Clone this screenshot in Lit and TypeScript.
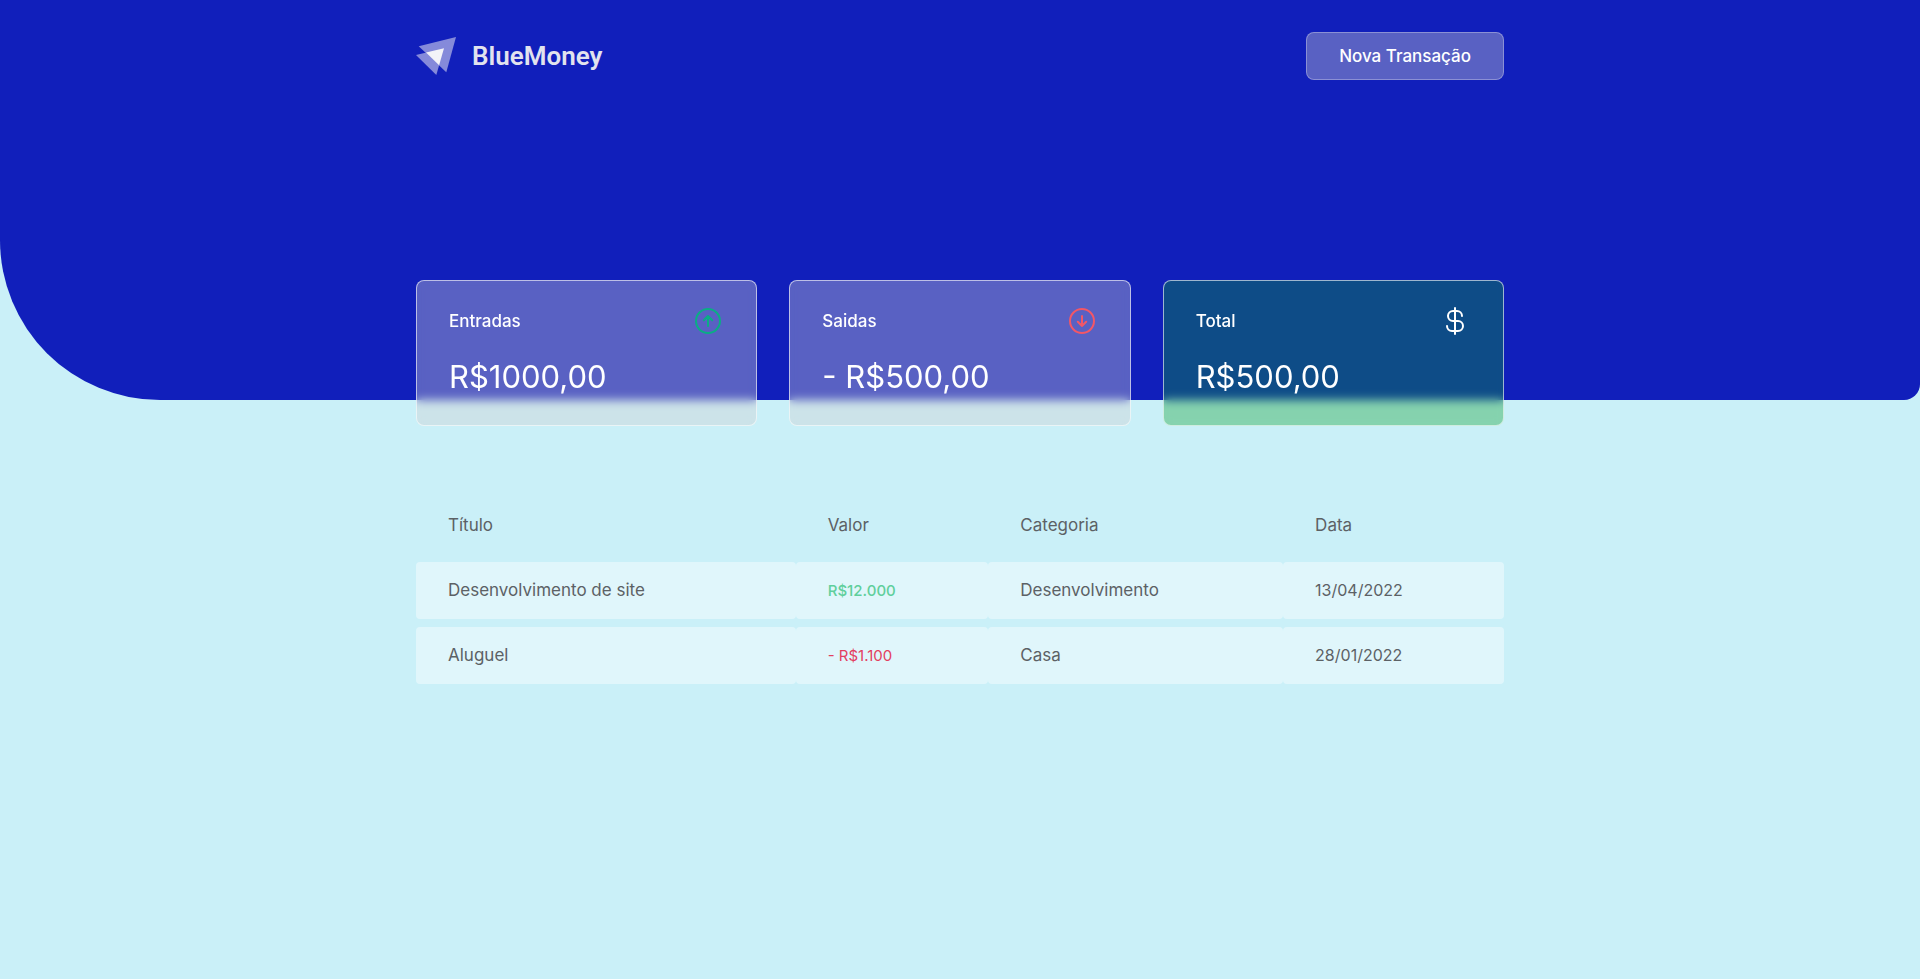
import { LitElement, html, css, svg } from "lit";
import { customElement, property } from "lit/decorators.js";
import { classMap } from "lit/directives/class-map.js";

type Kind = "income" | "outcome" | "total";

interface Transaction {
  title: string;
  amount: string;
  negative: boolean;
  category: string;
  date: string;
}

const transactions: Transaction[] = [
  { title: "Desenvolvimento de site", amount: "R$12.000", negative: false, category: "Desenvolvimento", date: "13/04/2022" },
  { title: "Aluguel", amount: "- R$1.100", negative: true, category: "Casa", date: "28/01/2022" },
];

const icons = {
  income: svg`<circle cx="16" cy="16" r="12"/><path d="M11.8 15.2 16 11l4.2 4.2M16 21V11"/>`,
  outcome: svg`<circle cx="16" cy="16" r="12"/><path d="M11.8 16.8 16 21l4.2-4.2M16 11v10"/>`,
  total: svg`<path d="M16 3v26M23 11a5 5 0 0 0-5-5h-4a5 5 0 0 0 0 10h5a5 5 0 0 1 0 10h-6a5 5 0 0 1-5-5"/>`,
};

@customElement("summary-card")
export class SummaryCard extends LitElement {
  @property() kind: Kind = "income";
  @property() label = "";
  @property() value = "";

  static styles = css`
    :host {
      display: block;
    }
    .card {
      padding: 24px 32px;
      border: 1px solid rgba(255, 255, 255, 0.6);
      border-radius: 8px;
      background: rgba(208, 205, 208, 0.38);
      backdrop-filter: blur(5px);
      color: #fff;
    }
    .card.total {
      background: rgba(11, 158, 44, 0.36);
    }
    .top {
      display: flex;
      align-items: center;
      justify-content: space-between;
    }
    .label {
      margin: 0;
      font-size: 17px;
      line-height: 24px;
      font-weight: 500;
    }
    .value {
      margin: 16px 0 0;
      font-size: 31px;
      line-height: 48px;
      font-weight: 400;
    }
    .icon {
      width: 32px;
      height: 32px;
      fill: none;
      stroke: #fff;
      stroke-width: 2;
      stroke-linecap: round;
      stroke-linejoin: round;
    }
    .income .icon {
      stroke: #0aae85;
    }
    .outcome .icon {
      stroke: #f25767;
    }
  `;

  render() {
    return html`
      <article class=${classMap({ card: true, [this.kind]: true })}>
        <div class="top">
          <h2 class="label">${this.label}</h2>
          <svg class="icon" viewBox="0 0 32 32" aria-hidden="true">${icons[this.kind]}</svg>
        </div>
        <p class="value">${this.value}</p>
      </article>
    `;
  }
}

@customElement("app-root")
export class AppRoot extends LitElement {
  static styles = css`
    :host {
      display: block;
      min-height: 100vh;
      background: #caf0f8;
      font-family: Inter, "Open Sans", sans-serif;
    }
    .container {
      box-sizing: border-box;
      max-width: 1120px;
      margin: 0 auto;
      padding: 0 16px;
    }
    .hero {
      box-sizing: border-box;
      height: 400px;
      padding-top: 32px;
      border-radius: 0 0 16px 160px;
      background: #111fbb;
    }
    .bar {
      display: flex;
      align-items: center;
      justify-content: space-between;
    }
    .brand {
      display: flex;
      align-items: center;
      gap: 16px;
      color: #e2e3ee;
      font-family: Roboto, sans-serif;
      font-size: 26px;
      line-height: 32px;
      font-weight: 600;
      text-decoration: none;
    }
    .logo {
      width: 40px;
      height: 38px;
    }
    .new {
      height: 48px;
      padding: 0 32px;
      border: 1px solid rgba(255, 255, 255, 0.3);
      border-radius: 8px;
      background: rgba(208, 205, 208, 0.38);
      color: #fff;
      font-family: inherit;
      font-size: 17px;
      line-height: 24px;
      font-weight: 500;
      cursor: pointer;
    }
    .summary {
      display: grid;
      grid-template-columns: repeat(3, 1fr);
      gap: 32px;
      margin-top: -120px;
    }
    .list {
      width: 100%;
      margin-top: 63px;
      border-collapse: separate;
      border-spacing: 0 8px;
      table-layout: fixed;
      color: #5c6165;
      font-size: 17px;
      line-height: 25px;
    }
    .list th,
    .list td {
      box-sizing: border-box;
      padding: 16px 32px;
      font-weight: 400;
      text-align: left;
      white-space: nowrap;
    }
    .list td {
      border-radius: 4px;
      background: #e0f6fb;
    }
    .list .gain,
    .list .loss {
      font-size: 15px;
    }
    .list .gain {
      color: #5fcf9c;
      font-weight: 500;
    }
    .list .loss {
      color: #e33f5f;
    }
    .list .date {
      font-size: 16px;
    }
    .c-title {
      width: 34.9%;
    }
    .c-amount {
      width: 17.7%;
    }
    .c-category {
      width: 27.1%;
    }
  `;

  render() {
    return html`
      <header class="hero">
        <div class="container bar">
          <a class="brand" href="#">
            <svg class="logo" viewBox="0 0 40 38" aria-hidden="true">
              <path d="M2.7 9.3 40 0l-9.7 35.3z" fill="#858ada" />
              <path d="M0 18l28-6.7L20.3 38z" fill="#858ada" />
              <path d="M10 15.6l18-4.3-4.9 17z" fill="#f3f3f8" />
            </svg>
            BlueMoney
          </a>
          <button class="new" type="button">Nova Transação</button>
        </div>
      </header>
      <main class="container">
        <section class="summary" aria-label="Resumo">
          <summary-card kind="income" label="Entradas" value="R$1000,00"></summary-card>
          <summary-card kind="outcome" label="Saidas" value="- R$500,00"></summary-card>
          <summary-card kind="total" label="Total" value="R$500,00"></summary-card>
        </section>
        <table class="list">
          <thead>
            <tr>
              <th class="c-title" scope="col">Título</th>
              <th class="c-amount" scope="col">Valor</th>
              <th class="c-category" scope="col">Categoria</th>
              <th scope="col">Data</th>
            </tr>
          </thead>
          <tbody>
            ${transactions.map(
              (t) => html`
                <tr>
                  <td>${t.title}</td>
                  <td class=${t.negative ? "loss" : "gain"}>${t.amount}</td>
                  <td>${t.category}</td>
                  <td class="date">${t.date}</td>
                </tr>
              `,
            )}
          </tbody>
        </table>
      </main>
    `;
  }
}
